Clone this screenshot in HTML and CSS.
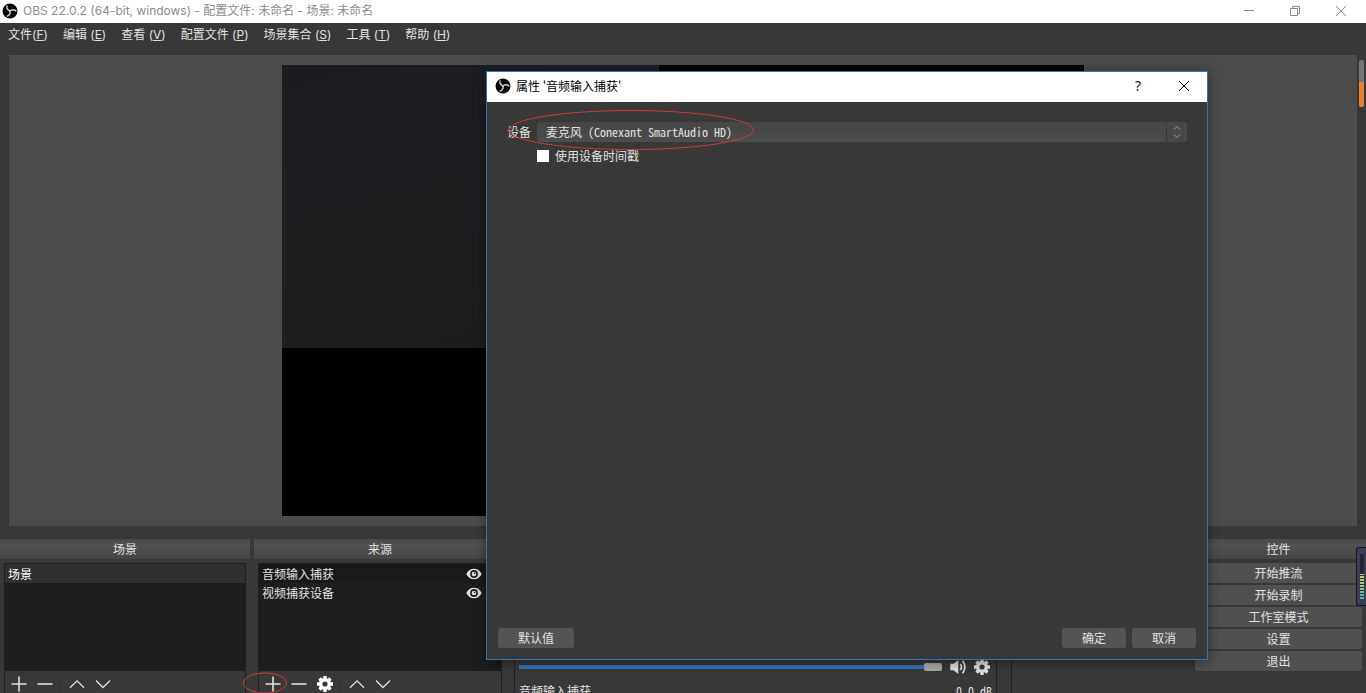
FILE: index.html
```html
<!DOCTYPE html>
<html lang="zh-CN">
<head>
<meta charset="utf-8">
<title>OBS 22.0.2</title>
<link rel="stylesheet" href="styles.css">
</head>
<body>
<svg class="defs" aria-hidden="true">
  <symbol id="logo" viewBox="0 0 16 16">
    <circle cx="8" cy="8" r="7.5" fill="#060606"/>
    <g fill="none" stroke="#d0d0d0" stroke-width="1.4" stroke-linecap="round">
      <path id="blade" d="M8 8C6.200 7.300 4.600 5.800 5 3"/>
      <use href="#blade" transform="rotate(120 8 8)"/>
      <use href="#blade" transform="rotate(240 8 8)"/>
    </g>
  </symbol>
  <symbol id="plus" viewBox="0 0 16 16"><path d="M8 .5v15M.5 8h15" stroke="currentColor" stroke-width="1.6"/></symbol>
  <symbol id="minus" viewBox="0 0 16 16"><path d="M.5 8h15" stroke="currentColor" stroke-width="1.6"/></symbol>
  <symbol id="up" viewBox="0 0 16 16"><path d="M1 11.8l7-7 7 7" fill="none" stroke="currentColor" stroke-width="1.3"/></symbol>
  <symbol id="down" viewBox="0 0 16 16"><path d="M1 4.5l7 7 7-7" fill="none" stroke="currentColor" stroke-width="1.3"/></symbol>
  <symbol id="gear" viewBox="0 0 16 16">
    <g stroke="currentColor" stroke-width="3.4"><path d="M8 0v16M0 8h16M2.5 2.5l11 11M13.5 2.5l-11 11"/></g>
    <circle cx="8" cy="8" r="6.1" fill="currentColor"/>
    <circle cx="8" cy="8" r="2.6" fill="#383838"/>
  </symbol>
  <symbol id="eye" viewBox="0 0 16 12">
    <path d="M.3 6C2 2.600 4.800.7 8 .7S14 2.600 15.700 6C14 9.400 11.200 11.300 8 11.300S2 9.400.3 6z" fill="#e2e2e2"/>
    <circle cx="8" cy="6" r="3.900" fill="#1c1c1c"/><circle cx="8" cy="6" r="2.300" fill="#e2e2e2"/><circle cx="8.600" cy="5.400" r=".8" fill="#1c1c1c"/>
  </symbol>
  <symbol id="speaker" viewBox="0 0 16 16">
    <path d="M.3 4.800h3.200L8.300 1v14L3.500 11.200H.3z" fill="#e2e2e2"/>
    <path d="M10.300 5q2.400 3 0 6M12.600 1.800q4.600 6.200 0 12.400" fill="none" stroke="#e2e2e2" stroke-width="1.700"/>
  </symbol>
</svg>

<div class="app">
  <header class="titlebar">
    <svg class="logo"><use href="#logo"/></svg>
    <span class="title">OBS 22.0.2 (64-bit, windows) - 配置文件: 未命名 - 场景: 未命名</span>
    <button class="winbtn" aria-label="最小化"><svg viewBox="0 0 12 12"><path d="M1 5.500h10"/></svg></button>
    <button class="winbtn" aria-label="还原"><svg viewBox="0 0 12 12"><path d="M1.500 3.500h7v7h-7zM3.500 3.500v-2h7v7h-2"/></svg></button>
    <button class="winbtn" aria-label="关闭"><svg viewBox="0 0 12 12"><path d="M1 1l10 10M11 1L1 11"/></svg></button>
  </header>

  <nav class="menubar">
    <button>文件(<u>F</u>)</button>
    <button>编辑 (<u>E</u>)</button>
    <button>查看 (<u>V</u>)</button>
    <button>配置文件 (<u>P</u>)</button>
    <button>场景集合 (<u>S</u>)</button>
    <button>工具 (<u>T</u>)</button>
    <button>帮助 (<u>H</u>)</button>
  </nav>

  <main class="preview">
    <div class="canvas"><div class="camera"></div></div>
  </main>

  <div class="docks">
    <section class="dock">
      <h2>场景</h2>
      <div class="panel">
        <ul class="list scenes"><li class="selected">场景</li></ul>
        <div class="toolbar">
          <button aria-label="添加场景"><svg><use href="#plus"/></svg></button>
          <button aria-label="删除场景"><svg><use href="#minus"/></svg></button>
          <i class="sep"></i>
          <button aria-label="上移场景"><svg><use href="#up"/></svg></button>
          <button aria-label="下移场景"><svg><use href="#down"/></svg></button>
        </div>
      </div>
    </section>
    <section class="dock">
      <h2>来源</h2>
      <div class="panel">
        <ul class="list sources">
          <li class="current">音频输入捕获<svg class="eye"><use href="#eye"/></svg></li>
          <li>视频捕获设备<svg class="eye"><use href="#eye"/></svg></li>
        </ul>
        <div class="toolbar">
          <button aria-label="添加来源"><svg><use href="#plus"/></svg></button>
          <button aria-label="删除来源"><svg><use href="#minus"/></svg></button>
          <button aria-label="来源属性" class="bright"><svg><use href="#gear"/></svg></button>
          <i class="sep"></i>
          <button aria-label="上移来源"><svg><use href="#up"/></svg></button>
          <button aria-label="下移来源"><svg><use href="#down"/></svg></button>
        </div>
      </div>
    </section>
    <section class="dock">
      <h2>混音器</h2>
      <div class="mixer">
        <div class="volume">
          <input type="range" min="0" max="100" value="100" aria-label="音量">
          <button aria-label="静音"><svg><use href="#speaker"/></svg></button>
          <button aria-label="音频设置"><svg><use href="#gear"/></svg></button>
        </div>
        <div class="channel"><span>音频输入捕获</span><span class="level">0.0 dB</span></div>
      </div>
    </section>
    <section class="dock">
      <h2>转场</h2>
      <div class="transition"></div>
    </section>
    <section class="dock">
      <h2>控件</h2>
      <div class="controls">
        <button>开始推流</button>
        <button>开始录制</button>
        <button>工作室模式</button>
        <button>设置</button>
        <button>退出</button>
      </div>
    </section>
  </div>

  <div class="edge-scroll"></div>
  <div class="meter"><div class="bars"></div></div>

  <div class="dialog" role="dialog" aria-labelledby="dialog-title">
    <div class="dialog-head">
      <svg class="logo"><use href="#logo"/></svg>
      <span id="dialog-title" class="title">属性 '音频输入捕获'</span>
      <button class="winbtn help" aria-label="帮助">?</button>
      <button class="winbtn" aria-label="关闭对话框"><svg viewBox="0 0 12 12"><path d="M1 1l10 10M11 1L1 11"/></svg></button>
    </div>
    <form class="form">
      <label for="device">设备</label>
      <div class="combo">
        <select id="device"><option>麦克风 (Conexant SmartAudio HD)</option></select>
        <span class="spin"><svg viewBox="0 0 8 14"><path d="M1 4.500l3-3 3 3M1 9.500l3 3 3-3"/></svg></span>
      </div>
      <label class="check"><input type="checkbox">使用设备时间戳</label>
    </form>
    <div class="actions">
      <button class="default">默认值</button>
      <button>确定</button>
      <button>取消</button>
    </div>
    <svg class="mark mark-device" viewBox="0 0 248 42"><ellipse cx="124" cy="21" rx="122.500" ry="19.500"/></svg>
  </div>
  <svg class="mark mark-add" viewBox="0 0 46 22"><ellipse cx="23" cy="11" rx="21.500" ry="10"/></svg>
</div>
</body>
</html>
```
FILE: styles.css
```css
* { box-sizing: border-box; }

body {
  margin: 0;
  background: #383838;
  color: #e1e1e1;
  font: 12px/18px "Noto Sans CJK SC", sans-serif;
}

button, select, input { font: inherit; color: inherit; margin: 0; }
button { border: 0; padding: 0; background: none; }
svg { display: block; }
.defs { position: absolute; width: 0; height: 0; }

.app {
  position: relative;
  display: flex;
  flex-direction: column;
  height: 100vh;
  overflow: hidden;
}

.titlebar {
  display: flex;
  align-items: center;
  height: 23px;
  padding: 0 2px 1px;
  background: #fff;
  color: #8c8c8c;
  font-family: Inter, "Noto Sans CJK SC", sans-serif;
}
.logo { width: 16px; height: 16px; }
.title { flex: 1; padding-left: 5px; white-space: nowrap; }
.winbtn { width: 46px; display: flex; justify-content: center; }
.winbtn svg { width: 12px; height: 12px; fill: none; stroke: currentColor; }
.titlebar .winbtn { padding-bottom: 1px; }

.menubar {
  display: flex;
  gap: 15px;
  height: 24px;
  padding: 0 8px;
  font-family: Inter, "Noto Sans CJK SC", sans-serif;
}

.preview {
  flex: 1;
  min-height: 0;
  display: flex;
  justify-content: center;
  margin: 8px 9px 13px;
  padding: 10px;
  background: #4c4c4c;
}
.canvas { height: 100%; aspect-ratio: 16 / 9; background: #000; }
.camera {
  width: 47%;
  aspect-ratio: 4 / 3;
  background: linear-gradient(165deg, #1b1d22 0%, #1f1f23 30%, #201e1e 75%, #1b1a1a 100%);
}

.docks {
  display: grid;
  grid-template-columns: 250fr 252fr 493fr 180fr 175fr;
  gap: 4px;
  height: 154px;
}
.dock { display: flex; flex-direction: column; gap: 4px; min-width: 0; overflow: hidden; }
.dock h2 {
  flex: none;
  height: 20px;
  margin: 0;
  font: inherit;
  line-height: 20px;
  text-align: center;
  background: linear-gradient(#4a4a4a, #525252 30%, #454545);
}
.panel { flex: 1; display: flex; flex-direction: column; margin: 0 4px; border: solid #202020; border-width: 0 1px; }
.list {
  flex: 1;
  margin: 0;
  padding: 1px 0;
  list-style: none;
  background: #1e1e1e;
}
.list li { display: flex; align-items: center; justify-content: space-between; height: 19px; padding: 0 19px 0 3px; }
.list .selected { background: #303030; color: #fff; }
.list .current { background: #191919; }
.eye { width: 16px; height: 12px; }
.toolbar { display: flex; align-items: center; gap: 10px; height: 22px; padding: 4px 6px 0; }
.toolbar svg { width: 16px; height: 16px; }
.toolbar .bright { color: #fff; }
.sep { width: 1px; height: 22px; margin: 0 -3px 0 -2px; background: #333; }

.mixer {
  flex: 1;
  display: flex;
  flex-direction: column;
  justify-content: flex-end;
  margin: 0 6px 0 4px;
  padding: 0 4px;
  border: solid #202020;
  border-width: 0 1px;
}
.volume { display: flex; align-items: center; gap: 8px; padding: 0 2px 8px 0; }
.volume input { flex: 1; height: 8px; appearance: none; background: linear-gradient(#2f74b8, #2f74b8) center / 100% 4px no-repeat; }
.volume input::-webkit-slider-thumb { appearance: none; width: 18px; height: 8px; border-radius: 2px; background: #a8a8a8; }
.volume svg { width: 16px; height: 16px; }
.channel { display: flex; justify-content: space-between; height: 10px; line-height: 16px; overflow: hidden; }
.level { font-family: "Noto Sans Mono CJK SC", "Liberation Mono", monospace; }
.transition { flex: 1; margin: 0 4px; border-left: 1px solid #202020; }

.controls { display: flex; flex-direction: column; gap: 2px; padding: 0 4px; }
.controls button { height: 20px; border-radius: 3px; background: #505050; }

.edge-scroll {
  position: absolute;
  top: 60px;
  right: 2px;
  width: 5px;
  height: 47px;
  border-radius: 2px;
  background: linear-gradient(#767676 47%, #e8822c 47%);
}
.meter {
  position: absolute;
  top: 547px;
  right: 0;
  width: 10px;
  height: 59px;
  padding: 6px 2px 6px 3px;
  border: 1px solid #14161f;
  border-right: 0;
  border-radius: 3px 0 0 3px;
  background: #3b3f55;
}
.bars {
  height: 100%;
  background:
    repeating-linear-gradient(#262a3c 0 1px, transparent 1px 3px),
    linear-gradient(#202433 44%, #d2cf55 44%, #9cc974 70%, #3fc2a0);
}

.dialog {
  position: absolute;
  top: 71px;
  left: 486px;
  right: 158px;
  height: 589px;
  display: flex;
  flex-direction: column;
  border: 1px solid #2b78b8;
  background: #383838;
  box-shadow: 0 2px 12px rgba(0, 0, 0, .45);
}
.dialog-head {
  display: flex;
  align-items: center;
  height: 30px;
  padding: 0 0 2px 8px;
  background: #fff;
  color: #000;
}
.help { font: 14px/18px "Open Sans", sans-serif; }
.form {
  flex: 1;
  display: grid;
  grid-template-columns: 24px 1fr;
  align-content: start;
  gap: 4px 6px;
  padding: 20px 20px 0;
  line-height: 20px;
}
.combo { display: flex; gap: 1px; }
.combo select {
  flex: 1;
  height: 20px;
  padding: 0 9px;
  border: 0;
  border-radius: 3px 0 0 3px;
  appearance: none;
  background: linear-gradient(#454545, #4e4e4e);
  font-family: "Noto Sans Mono CJK SC", "Noto Sans CJK SC", monospace;
}
.spin { display: grid; place-items: center; width: 20px; border-radius: 0 3px 3px 0; background: #484848; }
.spin svg { width: 8px; height: 14px; fill: none; stroke: #a0a0a0; }
.check { grid-column: 2; display: flex; align-items: center; gap: 6px; }
.check input { width: 12px; height: 12px; appearance: none; background: #fff; }
.actions { display: flex; gap: 6px; padding: 0 11px 11px; }
.actions button { width: 64px; height: 20px; border-radius: 3px; background: #545454; }
.actions .default { width: 76px; margin-right: auto; }

.mark { position: absolute; fill: none; stroke: #c83c3c; pointer-events: none; }
.mark-device { top: 37px; left: 20px; width: 248px; height: 42px; }
.mark-add { top: 672px; left: 242px; width: 46px; height: 22px; }
```
